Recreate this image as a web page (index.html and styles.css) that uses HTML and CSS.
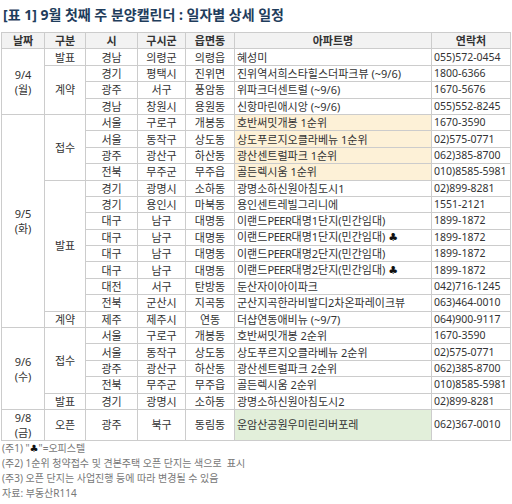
FILE: index.html
```html
<!DOCTYPE html>
<html lang="ko">
<head>
<meta charset="utf-8">
<title>분양캘린더</title>
<link rel="stylesheet" href="styles.css">
</head>
<body>
<h1 class="title">[표 1] 9월 첫째 주 분양캘린더 : 일자별 상세 일정</h1>
<table class="cal">
  <colgroup>
    <col class="c-date"><col class="c-type"><col class="c-si"><col class="c-gu"><col class="c-dong"><col class="c-apt"><col class="c-tel">
  </colgroup>
  <thead>
    <tr><th>날짜</th><th>구분</th><th>시</th><th>구시군</th><th>읍면동</th><th>아파트명</th><th>연락처</th></tr>
  </thead>
  <tbody>
    <tr><td rowspan="4" class="date">9/4<br>(월)</td><td>발표</td><td>경남</td><td>의령군</td><td>의령읍</td><td class="apt">혜성미</td><td class="tel">055)572-0454</td></tr>
    <tr><td rowspan="3">계약</td><td>경기</td><td>평택시</td><td>진위면</td><td class="apt">진위역서희스타힐스더파크뷰 (~9/6)</td><td class="tel">1800-6366</td></tr>
    <tr><td>광주</td><td>서구</td><td>풍암동</td><td class="apt">위파크더센트럴 (~9/6)</td><td class="tel">1670-5676</td></tr>
    <tr><td>경남</td><td>창원시</td><td>용원동</td><td class="apt">신항마린애시앙 (~9/6)</td><td class="tel">055)552-8245</td></tr>

    <tr><td rowspan="13" class="date">9/5<br>(화)</td><td rowspan="4">접수</td><td>서울</td><td>구로구</td><td>개봉동</td><td class="apt hl-y">호반써밋개봉 1순위</td><td class="tel">1670-3590</td></tr>
    <tr><td>서울</td><td>동작구</td><td>상도동</td><td class="apt hl-y">상도푸르지오클라베뉴 1순위</td><td class="tel">02)575-0771</td></tr>
    <tr><td>광주</td><td>광산구</td><td>하산동</td><td class="apt hl-y">광산센트럴파크 1순위</td><td class="tel">062)385-8700</td></tr>
    <tr><td>전북</td><td>무주군</td><td>무주읍</td><td class="apt hl-y">골든렉시움 1순위</td><td class="tel">010)8585-5981</td></tr>
    <tr><td rowspan="8">발표</td><td>경기</td><td>광명시</td><td>소하동</td><td class="apt">광명소하신원아침도시1</td><td class="tel">02)899-8281</td></tr>
    <tr><td>경기</td><td>용인시</td><td>마북동</td><td class="apt">용인센트레빌그리니에</td><td class="tel">1551-2121</td></tr>
    <tr><td>대구</td><td>남구</td><td>대명동</td><td class="apt">이랜드<span class="lat">PEER</span>대명1단지(민간임대)</td><td class="tel">1899-1872</td></tr>
    <tr><td>대구</td><td>남구</td><td>대명동</td><td class="apt">이랜드<span class="lat">PEER</span>대명1단지(민간임대) <span class="club">♣</span></td><td class="tel">1899-1872</td></tr>
    <tr><td>대구</td><td>남구</td><td>대명동</td><td class="apt">이랜드<span class="lat">PEER</span>대명2단지(민간임대)</td><td class="tel">1899-1872</td></tr>
    <tr><td>대구</td><td>남구</td><td>대명동</td><td class="apt">이랜드<span class="lat">PEER</span>대명2단지(민간임대) <span class="club">♣</span></td><td class="tel">1899-1872</td></tr>
    <tr><td>대전</td><td>서구</td><td>탄방동</td><td class="apt">둔산자이아이파크</td><td class="tel">042)716-1245</td></tr>
    <tr><td>전북</td><td>군산시</td><td>지곡동</td><td class="apt">군산지곡한라비발디2차온파레이크뷰</td><td class="tel">063)464-0010</td></tr>
    <tr><td>계약</td><td>제주</td><td>제주시</td><td>연동</td><td class="apt">더샵연동애비뉴 (~9/7)</td><td class="tel">064)900-9117</td></tr>

    <tr><td rowspan="5" class="date">9/6<br>(수)</td><td rowspan="4">접수</td><td>서울</td><td>구로구</td><td>개봉동</td><td class="apt">호반써밋개봉 2순위</td><td class="tel">1670-3590</td></tr>
    <tr><td>서울</td><td>동작구</td><td>상도동</td><td class="apt">상도푸르지오클라베뉴 2순위</td><td class="tel">02)575-0771</td></tr>
    <tr><td>광주</td><td>광산구</td><td>하산동</td><td class="apt">광산센트럴파크 2순위</td><td class="tel">062)385-8700</td></tr>
    <tr><td>전북</td><td>무주군</td><td>무주읍</td><td class="apt">골든렉시움 2순위</td><td class="tel">010)8585-5981</td></tr>
    <tr><td>발표</td><td>경기</td><td>광명시</td><td>소하동</td><td class="apt">광명소하신원아침도시2</td><td class="tel">02)899-8281</td></tr>

    <tr class="tall"><td class="date">9/8<br>(금)</td><td>오픈</td><td>광주</td><td>북구</td><td>동림동</td><td class="apt hl-g">운암산공원우미린리버포레</td><td class="tel">062)367-0010</td></tr>
  </tbody>
</table>
<div class="notes">
  <p>(주1) "<span class="club">♣</span>"=오피스텔</p>
  <p>(주2) 1순위 청약접수 및 견본주택 오픈 단지는 색으로&nbsp; 표시</p>
  <p>(주3) 오픈 단지는 사업진행 등에 따라 변경될 수 있음</p>
  <p>자료: 부동산R114</p>
</div>
</body>
</html>
```

FILE: styles.css
```css
html, body {
  margin: 0;
  padding: 0;
  background: #ffffff;
}

body {
  font-family: "Noto Sans", "Noto Sans CJK KR", sans-serif;
  color: #333333;
}

.title {
  margin: 0;
  height: 32px;
  box-sizing: border-box;
  padding: 5px 0 0 3px;
  font-size: 14px;
  line-height: 20px;
  font-weight: 700;
  color: #1f3d5c;
}

.cal {
  border-collapse: collapse;
  table-layout: fixed;
  width: 509px;
  margin-left: 1px;
  font-size: 11px;
}

.c-date { width: 43px; }
.c-type { width: 41px; }
.c-si { width: 52px; }
.c-gu { width: 48px; }
.c-dong { width: 49px; }
.c-apt { width: 197px; }
.c-tel { width: 79px; }

.cal tr {
  height: 16.4px;
}

.cal th,
.cal td {
  border: 1px solid #cccccc;
  padding: 0;
  line-height: 11px;
  text-align: center;
  vertical-align: middle;
  white-space: nowrap;
  overflow: hidden;
}

.cal th {
  background: #f2f2f2;
  font-weight: 700;
}

.cal td.apt,
.cal td.tel {
  text-align: left;
  padding-left: 2px;
}

.cal td.tel {
  font-size: 10.5px;
}

.lat {
  letter-spacing: -0.4px;
}

.cal td.date {
  line-height: 15px;
}

.cal tr.tall {
  height: 31px;
}

.hl-y { background: #fdf1d7; }
.hl-g { background: #e2efda; }

.club {
  color: #111111;
  font-family: "DejaVu Sans", sans-serif;
}

.notes {
  padding-left: 2px;
  font-size: 10px;
  line-height: 15px;
  color: #777777;
}

.notes p {
  margin: 0;
}
```
